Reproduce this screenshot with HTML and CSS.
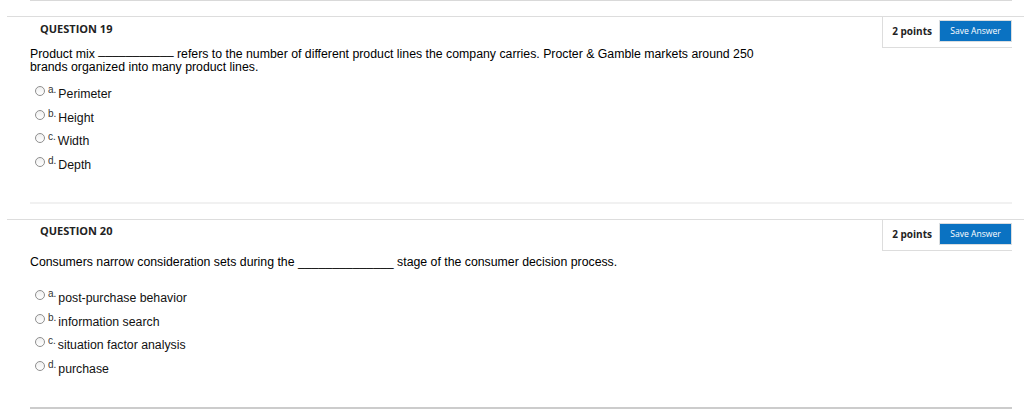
FILE: index.html
```html
<!DOCTYPE html>
<html lang="en">
<head>
<meta charset="utf-8">
<title>Questions</title>
<link rel="stylesheet" href="styles.css">
</head>
<body>
<div class="page">
  <hr class="sep sep-top">

  <section class="question">
    <header class="q-head">
      <h3 class="q-title">QUESTION 19</h3>
      <div class="q-points"><span class="pts">2 points</span><button class="save">Save Answer</button></div>
    </header>
    <div class="q-body">
      <p class="q-text">Product mix <span class="blank-raised">___________</span> refers to the number of different product lines the company carries. Procter &amp; Gamble markets around 250<br>brands organized into many product lines.</p>
      <ul class="q-options">
        <li class="opt"><span class="radio"></span><span class="letter">a.</span><span class="label">Perimeter</span></li>
        <li class="opt"><span class="radio"></span><span class="letter">b.</span><span class="label">Height</span></li>
        <li class="opt"><span class="radio"></span><span class="letter">c.</span><span class="label">Width</span></li>
        <li class="opt"><span class="radio"></span><span class="letter">d.</span><span class="label">Depth</span></li>
      </ul>
    </div>
    <hr class="sep sep-light">
  </section>

  <section class="question">
    <header class="q-head">
      <h3 class="q-title q-title-tight">QUESTION 20</h3>
      <div class="q-points"><span class="pts">2 points</span><button class="save">Save Answer</button></div>
    </header>
    <div class="q-body q-body-spaced">
      <p class="q-text">Consumers narrow consideration sets during the ______________ stage of the consumer decision process.</p>
      <ul class="q-options">
        <li class="opt"><span class="radio"></span><span class="letter">a.</span><span class="label">post-purchase behavior</span></li>
        <li class="opt"><span class="radio"></span><span class="letter">b.</span><span class="label">information search</span></li>
        <li class="opt"><span class="radio"></span><span class="letter">c.</span><span class="label">situation factor analysis</span></li>
        <li class="opt"><span class="radio"></span><span class="letter">d.</span><span class="label">purchase</span></li>
      </ul>
    </div>
    <hr class="sep sep-dark">
  </section>
</div>
</body>
</html>
```

FILE: styles.css
```css
html, body {
  margin: 0;
  padding: 0;
  background: #ffffff;
}

body {
  font-family: "Liberation Sans", Arial, sans-serif;
  font-size: 12.3px;
  color: #000000;
}

.page {
  width: 1024px;
}

.sep {
  border: 0;
  height: 2px;
  margin: 0 12px 15px 30px;
  background: #ededed;
}

.sep-top {
  margin-top: -1px;
  background: #d9d9d9;
}

.sep-light {
  background: #f1f1f1;
  margin-top: 25px;
}

.sep-dark {
  background: #cccccc;
  margin-top: 26px;
}

.q-head {
  display: flex;
  justify-content: space-between;
  align-items: flex-start;
  height: 30px;
  margin-left: 7px;
  padding-right: 12px;
  border-top: 1px solid #dddddd;
}

.q-title {
  margin: 4px 0 0 33px;
  font-family: "Open Sans", sans-serif;
  font-size: 11px;
  line-height: 15px;
  font-weight: 700;
  color: #222222;
}

.q-title-tight {
  margin-top: 3px;
}

.q-points {
  display: flex;
  align-items: center;
  gap: 7px;
  padding: 3px 0 5px 9px;
  border-left: 1px solid #dddddd;
  border-bottom: 1px solid #dddddd;
  background: #ffffff;
}

.pts {
  font-family: "Open Sans", sans-serif;
  font-size: 10px;
  font-weight: 700;
  color: #222222;
}

.save {
  box-sizing: border-box;
  width: 73px;
  height: 22px;
  padding: 0;
  border: 1px solid #d9dde0;
  background: #0a72c2;
  color: #ffffff;
  font-family: "Open Sans", sans-serif;
  font-size: 8.6px;
  line-height: 18px;
}

.q-body {
  padding-left: 30px;
}

.q-text {
  margin: 1px 0 0 0;
  line-height: 13px;
}

.blank-raised {
  line-height: 0;
  vertical-align: 4px;
}

.q-options {
  list-style: none;
  margin: 9px 0 0 0;
  padding: 0;
}

.q-body-spaced .q-text {
  margin-top: 6px;
}

.q-body-spaced .q-options {
  margin-top: 18px;
}

.opt {
  height: 23.5px;
  line-height: 23px;
  white-space: nowrap;
}

.radio {
  display: inline-block;
  box-sizing: border-box;
  width: 10px;
  height: 10px;
  margin-left: 5px;
  margin-right: 3px;
  border: 1px solid #8f8f8f;
  border-radius: 50%;
  background: linear-gradient(#f0f0f0, #ffffff);
  vertical-align: 2px;
}

.letter {
  display: inline-block;
  font-size: 10px;
  line-height: 10px;
  color: #333333;
  margin-right: 2px;
  vertical-align: 5px;
}

.label {
  color: #111111;
}
```
